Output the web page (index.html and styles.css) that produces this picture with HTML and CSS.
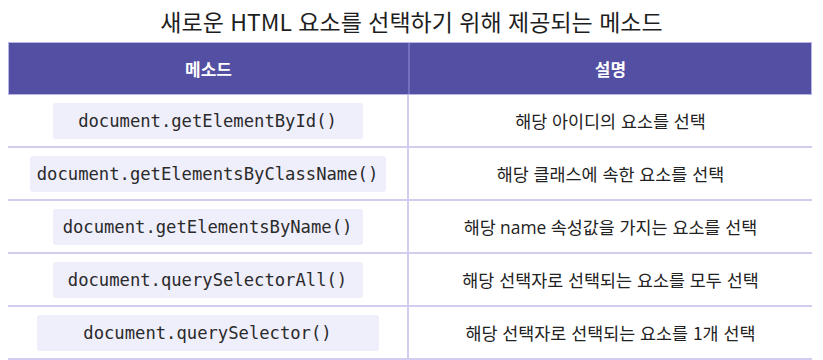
FILE: index.html
```html
<!DOCTYPE html>
<html lang="ko">
<head>
<meta charset="utf-8">
<link rel="stylesheet" href="styles.css">
</head>
<body>
<h1 class="title">새로운 HTML 요소를 선택하기 위해 제공되는 메소드</h1>
<div class="table">
  <div class="head">
    <div class="hcell">메소드</div>
    <div class="hcell">설명</div>
  </div>
  <div class="row">
    <div class="cell"><code class="code w310">document.getElementById()</code></div>
    <div class="cell desc">해당 아이디의 요소를 선택</div>
  </div>
  <div class="row">
    <div class="cell"><code class="code w356">document.getElementsByClassName()</code></div>
    <div class="cell desc">해당 클래스에 속한 요소를 선택</div>
  </div>
  <div class="row">
    <div class="cell"><code class="code w310">document.getElementsByName()</code></div>
    <div class="cell desc">해당 <span class="latin">name</span> 속성값을 가지는 요소를 선택</div>
  </div>
  <div class="row">
    <div class="cell"><code class="code w310">document.querySelectorAll()</code></div>
    <div class="cell desc">해당 선택자로 선택되는 요소를 모두 선택</div>
  </div>
  <div class="row">
    <div class="cell"><code class="code w342">document.querySelector()</code></div>
    <div class="cell desc">해당 선택자로 선택되는 요소를 1개 선택</div>
  </div>
</div>
</body>
</html>
```

FILE: styles.css
```css
html, body {
  margin: 0;
  padding: 0;
  background: #ffffff;
}
body {
  width: 823px;
  height: 360px;
  overflow: hidden;
  font-family: "Noto Sans CJK KR", "Noto Sans", sans-serif;
  color: #222222;
}
.title {
  margin: 0;
  height: 42px;
  display: flex;
  align-items: center;
  justify-content: center;
  font-size: 23px;
  font-weight: 400;
  letter-spacing: 0;
  color: #1e1e1e;
  padding-bottom: 1px;
  box-sizing: border-box;
}
.table {
  width: 804px;
  margin-left: 8px;
}
.head {
  display: grid;
  grid-template-columns: 401px 1fr;
  height: 53px;
  background: #534fa2;
  border: 1px solid #b9b5e6;
  box-sizing: border-box;
}
.hcell {
  display: flex;
  align-items: center;
  justify-content: center;
  color: #ffffff;
  font-weight: 700;
  font-size: 17px;
}
.hcell:first-child {
  border-right: 2px solid #7470c0;
}
.row {
  display: grid;
  grid-template-columns: 401px 1fr;
  height: 53px;
  box-sizing: border-box;
  border-bottom: 2px solid #d0cdee;
}
.cell {
  display: flex;
  align-items: center;
  justify-content: center;
}
.cell:first-child {
  border-right: 2px solid #d0cdee;
}
.code {
  display: flex;
  align-items: center;
  justify-content: center;
  height: 36px;
  margin-top: 1px;
  background: #efeefb;
  border-radius: 3px;
  font-family: "DejaVu Sans Mono", "Liberation Mono", monospace;
  font-size: 17.2px;
  color: #2a2a2a;
  box-sizing: border-box;
}
.w310 { width: 310px; }
.w342 { width: 342px; }
.w356 { width: 356px; }
.desc {
  font-size: 17.4px;
  color: #222222;
}
.latin {
  font-family: "Open Sans", "Noto Sans", sans-serif;
  margin: 0 0.25em;
}
```
